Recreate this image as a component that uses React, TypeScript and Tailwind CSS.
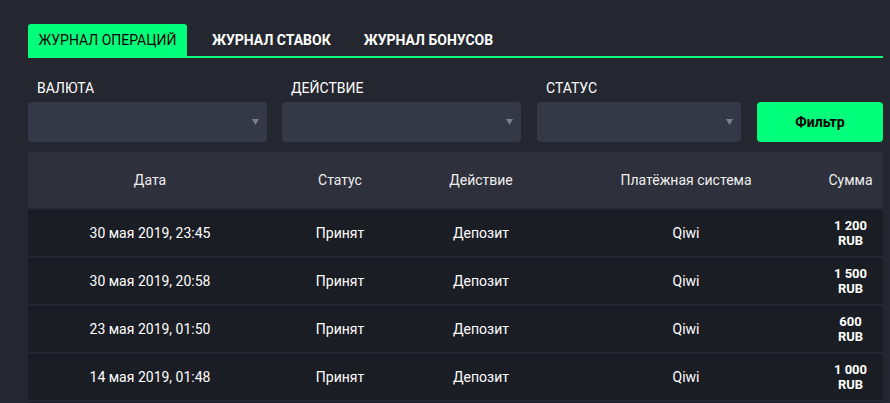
import React from "react";

const rows = [
  { date: "30 мая 2019, 23:45", amount: "1 200" },
  { date: "30 мая 2019, 20:58", amount: "1 500" },
  { date: "23 мая 2019, 01:50", amount: "600" },
  { date: "14 мая 2019, 01:48", amount: "1 000" },
];

function Select({ w }: { w: string }) {
  return (
    <div className={`${w} h-[40px] rounded-[4px] bg-[#353846] flex items-center justify-end pr-[8px]`}>
      <svg width="7" height="6" viewBox="0 0 7 6">
        <path d="M0 0 L7 0 L3.5 6 Z" fill="#7d808b" />
      </svg>
    </div>
  );
}

export default function App() {
  return (
    <div
      className="w-[890px] h-[403px] overflow-hidden bg-[#252730] text-white"
      style={{ fontFamily: "Roboto, 'Noto Sans', sans-serif" }}
    >
      <div className="pt-[24px] pl-[28px] w-[883px]">
        {/* Tabs */}
        <div className="flex items-end border-b-2 border-[#00ff7b] h-[34px]">
          <div className="h-[32px] px-[10px] w-[159px] flex items-center justify-center rounded-t-[3px] bg-[#00ff7b] text-black text-[14px] uppercase whitespace-nowrap">
            Журнал операций
          </div>
          <div className="h-[32px] flex items-center ml-[25px] text-[14px] font-bold uppercase whitespace-nowrap">
            Журнал ставок
          </div>
          <div className="h-[32px] flex items-center ml-[33px] text-[14px] font-bold uppercase whitespace-nowrap">
            Журнал бонусов
          </div>
        </div>

        {/* Filters */}
        <div className="flex items-end mt-[22px]">
          <div className="flex flex-col">
            <div className="pl-[9px] text-[14px] leading-[16px] mb-[6px] uppercase">Валюта</div>
            <Select w="w-[239px]" />
          </div>
          <div className="flex flex-col ml-[15px]">
            <div className="pl-[9px] text-[14px] leading-[16px] mb-[6px] uppercase">Действие</div>
            <Select w="w-[239px]" />
          </div>
          <div className="flex flex-col ml-[16px]">
            <div className="pl-[9px] text-[14px] leading-[16px] mb-[6px] uppercase">Статус</div>
            <Select w="w-[204px]" />
          </div>
          <button className="ml-[16px] w-[126px] h-[40px] rounded-[4px] bg-[#00ff7b] text-black text-[14px] font-bold">
            Фильтр
          </button>
        </div>

        {/* Table */}
        <div className="mt-[10px] flex flex-col gap-[2px]">
          <div className="grid grid-cols-[244px_136px_146px_264px_65px] h-[56px] items-center rounded-t-[4px] bg-[#2e303b] text-[14px] text-[#eeeeee] text-center">
            <div>Дата</div>
            <div>Статус</div>
            <div>Действие</div>
            <div>Платёжная система</div>
            <div>Сумма</div>
          </div>
          {rows.map((r, i) => (
            <div
              key={i}
              className="grid grid-cols-[244px_136px_146px_264px_65px] h-[46px] items-center bg-[#1b1d24] text-[14px] text-center"
            >
              <div>{r.date}</div>
              <div>Принят</div>
              <div>Депозит</div>
              <div>Qiwi</div>
              <div className="text-[13px] font-bold leading-[15px]">
                <div>{r.amount}</div>
                <div>RUB</div>
              </div>
            </div>
          ))}
          <div className="h-[46px] bg-[#1b1d24]" />
        </div>
      </div>
    </div>
  );
}
